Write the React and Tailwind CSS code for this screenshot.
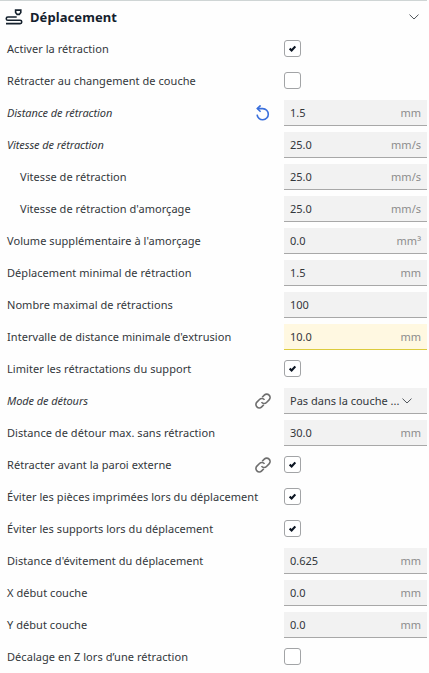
import React from 'react';
import clsx from 'clsx';

const settings = [
    { label: 'Activer la rétraction', type: 'check', checked: true },
    { label: 'Rétracter au changement de couche', type: 'check' },
    { label: 'Distance de rétraction', value: '1.5', unit: 'mm', italic: true, icon: 'reset' },
    { label: 'Vitesse de rétraction', value: '25.0', unit: 'mm/s', italic: true },
    { label: 'Vitesse de rétraction', value: '25.0', unit: 'mm/s', indent: true },
    { label: "Vitesse de rétraction d'amorçage", value: '25.0', unit: 'mm/s', indent: true },
    { label: "Volume supplémentaire à l'amorçage", value: '0.0', unit: 'mm³' },
    { label: 'Déplacement minimal de rétraction', value: '1.5', unit: 'mm' },
    { label: 'Nombre maximal de rétractions', value: '100' },
    { label: "Intervalle de distance minimale d'extrusion", value: '10.0', unit: 'mm', warning: true },
    { label: 'Limiter les rétractations du support', type: 'check', checked: true },
    { label: 'Mode de détours', type: 'select', value: 'Pas dans la couche ...', italic: true, icon: 'link' },
    { label: 'Distance de détour max. sans rétraction', value: '30.0', unit: 'mm' },
    { label: 'Rétracter avant la paroi externe', type: 'check', checked: true, icon: 'link' },
    { label: 'Éviter les pièces imprimées lors du déplacement', type: 'check', checked: true },
    { label: 'Éviter les supports lors du déplacement', type: 'check', checked: true },
    { label: "Distance d'évitement du déplacement", value: '0.625', unit: 'mm' },
    { label: 'X début couche', value: '0.0', unit: 'mm' },
    { label: 'Y début couche', value: '0.0', unit: 'mm' },
    { label: 'Décalage en Z lors d’une rétraction', type: 'check' },
];

function TravelIcon() {
    return (
        <svg width="18" height="18" viewBox="0 0 18 18" fill="none" stroke="#14202c" strokeWidth="1.6" className="shrink-0">
            <path d="M10.6 2.1h5.2v2.4l-1.5 1.9h-2.2l-1.5-1.9z" />
            <path d="M11.7 9H2.9a1.65 1.65 0 0 0 0 3.3h12.2a1.65 1.65 0 0 1 0 3.3H1" />
        </svg>
    );
}

function ChevronIcon() {
    return (
        <svg width="10" height="6" viewBox="0 0 10 6" fill="none" stroke="#50555b" strokeWidth="1" className="shrink-0">
            <path d="M0.5 0.6L5 5L9.5 0.6" />
        </svg>
    );
}

function ResetIcon() {
    return (
        <svg width="16" height="16" viewBox="0 0 16 16" fill="none" stroke="#3a6fdc" strokeWidth="1.6">
            <path d="M5.6 0.4L2.3 3.6L5.6 6.8" />
            <path d="M2.5 3.6H7.8a5.6 5.6 0 1 1-5.7 6" />
        </svg>
    );
}

function LinkIcon() {
    return (
        <svg width="16" height="16" viewBox="0 0 16 16" fill="none" stroke="#6e6e6e" strokeWidth="1.6">
            <path d="M6.5 9.1a3.3 3.3 0 0 0 5 .4l2.6-2.6a3.35 3.35 0 0 0-4.8-4.8L7.2 4.2" />
            <path d="M9.5 6.9a3.3 3.3 0 0 0-5-.4L1.9 9.1a3.35 3.35 0 0 0 4.8 4.8l2.1-2.1" />
        </svg>
    );
}

function Checkbox({ checked }) {
    return (
        <div className="mb-px flex size-[17px] items-center justify-center rounded-[3px] border border-[#a2a4a6] bg-white">
            {checked && (
                <svg width="7" height="7" viewBox="0 0 7 7" fill="none" stroke="#0c1522" strokeWidth="2.1">
                    <path d="M0.7 3.6L2.6 5.4L6.3 1.4" />
                </svg>
            )}
        </div>
    );
}

function Control({ item }) {
    if (item.type === 'check') return <Checkbox checked={item.checked} />;

    return (
        <div
            className={clsx(
                'flex h-[26px] w-full items-center border-b px-1.5 pt-px',
                item.warning ? 'border-[#dccb3c] bg-[#fff8e1]' : 'border-[#a8a8a8] bg-[#f2f2f2]'
            )}
        >
            <span className="whitespace-nowrap">{item.value}</span>
            {item.type === 'select' ? (
                <span className="ml-auto pr-[9px]"><ChevronIcon /></span>
            ) : (
                <span className="ml-auto text-[#8c8c8c]">{item.unit}</span>
            )}
        </div>
    );
}

function SettingRow({ item }) {
    return (
        <div className="flex h-8 items-center">
            <span
                className={clsx(
                    'min-w-0 flex-1 whitespace-nowrap',
                    item.indent ? 'pl-5' : 'pl-[7px]',
                    item.italic ? 'tracking-[-0.08px] italic' : 'tracking-[0.05px]'
                )}
            >
                {item.label}
            </span>
            <div className="flex w-[29px] shrink-0 items-center">
                {item.icon === 'reset' && <ResetIcon />}
                {item.icon === 'link' && <LinkIcon />}
            </div>
            <div className="w-[143px] shrink-0">
                <Control item={item} />
            </div>
        </div>
    );
}

export default function App() {
    return (
        <div className="h-[673px] w-[429px] bg-[#fefefe] pr-0.5 font-['Noto_Sans',sans-serif] text-[11px] leading-4 text-[#33373b]">
            <div className="flex h-[33px] items-center border-t border-[#cfd5d5] pr-2 pl-[5px]">
                <TravelIcon />
                <h2 className="ml-[7px] flex-1 text-[13px] font-bold tracking-[0.08px] text-[#14202c]">Déplacement</h2>
                <ChevronIcon />
            </div>
            {settings.map((item, i) => (
                <SettingRow key={i} item={item} />
            ))}
        </div>
    );
}
